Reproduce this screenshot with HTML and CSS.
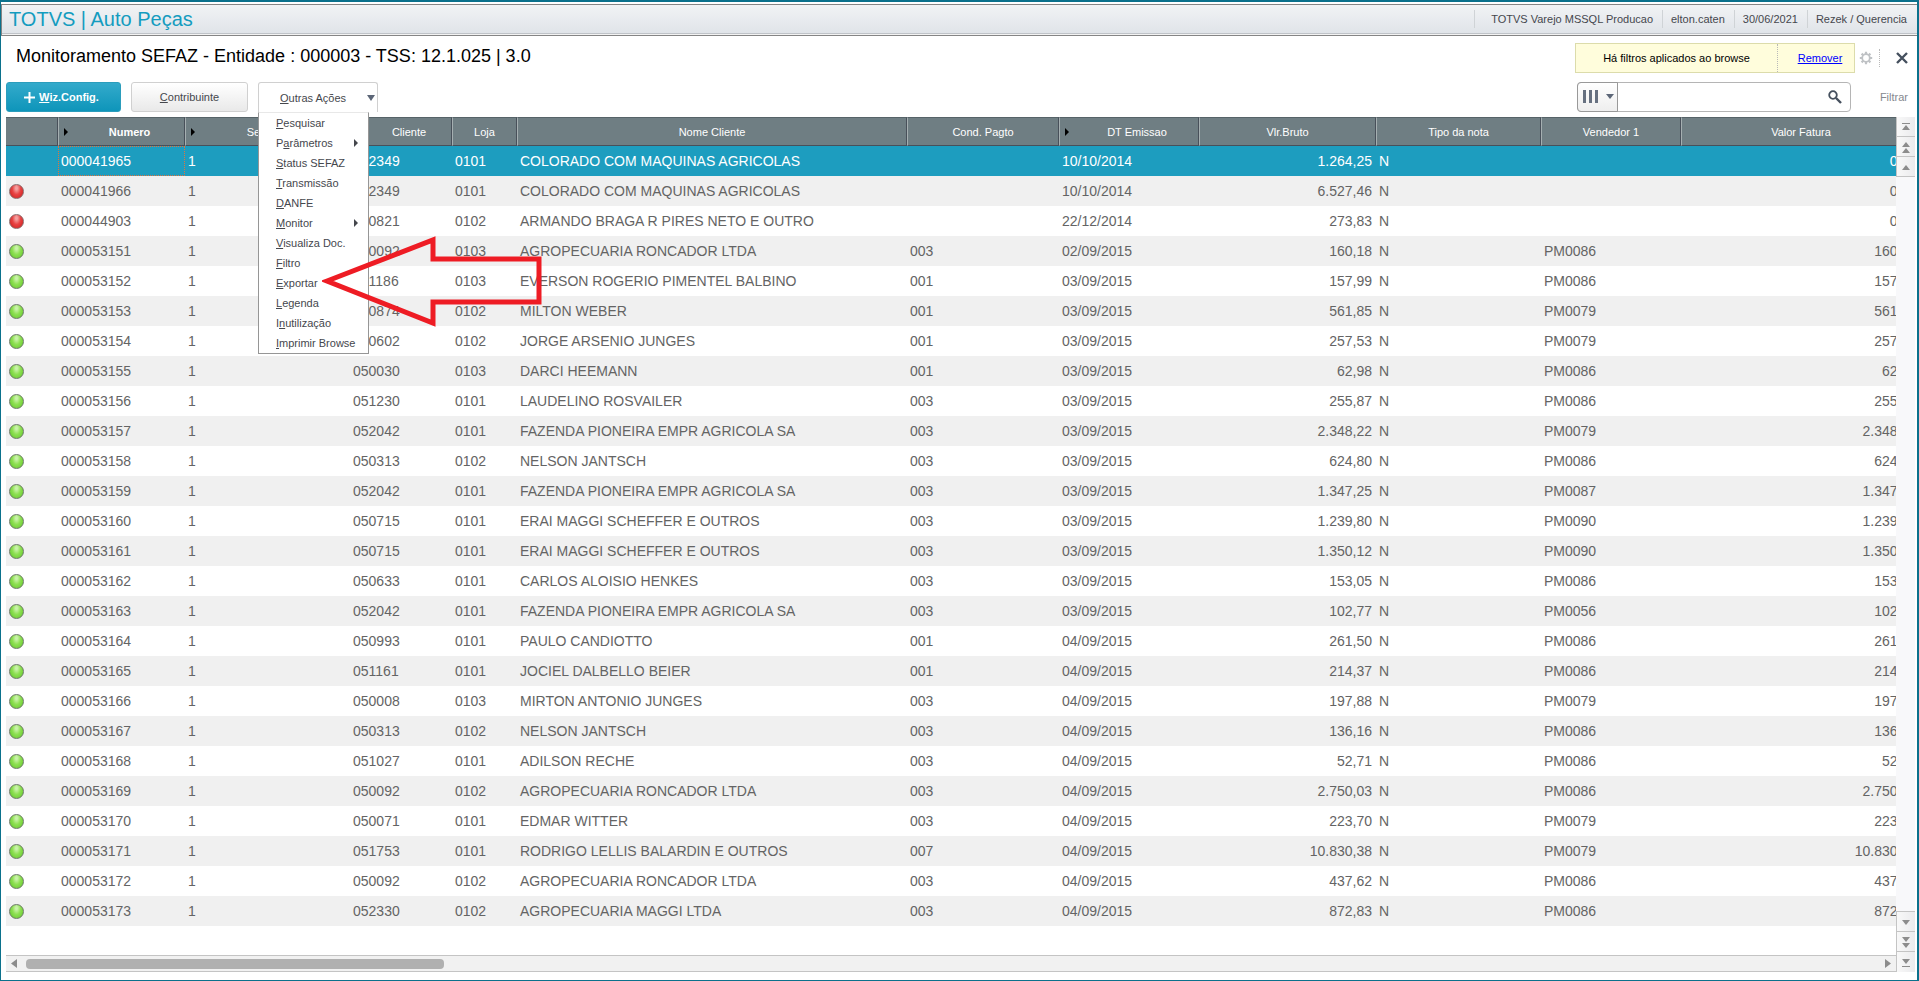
FILE: index.html
```html
<!DOCTYPE html>
<html lang="pt-BR">
<head>
  <meta charset="UTF-8" />
  <meta name="viewport" content="width=device-width, initial-scale=1.0" />
  <title>TOTVS | Auto Peças</title>
  <link rel="stylesheet" href="styles.css">
</head>
<body>
  <header class="topbar">
    <div class="brand">TOTVS | Auto Peças</div>
    <ul class="session">
      <li>TOTVS Varejo MSSQL Producao</li>
      <li>elton.caten</li>
      <li>30/06/2021</li>
      <li>Rezek / Querencia</li>
    </ul>
  </header>

  <main class="page">
    <div class="title-row">
      <h1>Monitoramento SEFAZ - Entidade : 000003 - TSS: 12.1.025 | 3.0</h1>
      <div class="filter-notice">
        <span class="notice-text">Há filtros aplicados ao browse</span>
        <span class="notice-action"><a href="#">Remover</a></span>
      </div>
      <button type="button" class="icon-button gear" aria-label="Configurar">
        <svg width="14" height="14" viewBox="0 0 14 14">
          <circle cx="7" cy="7" r="3.8" fill="none" stroke="#bfc2c5" stroke-width="1.8" />
          <path d="M7 0.8V3M7 11V13.2M0.8 7H3M11 7H13.2M2.6 2.6L4.2 4.2M9.8 9.8L11.4 11.4M2.6 11.4L4.2 9.8M9.8 4.2L11.4 2.6" stroke="#bfc2c5" stroke-width="2.2" />
        </svg>
      </button>
      <button type="button" class="icon-button close" aria-label="Fechar">
        <svg width="14" height="14" viewBox="0 0 14 14">
          <path d="M2 2L12 12M12 2L2 12" fill="none" stroke="#45505e" stroke-width="2.4" />
        </svg>
      </button>
    </div>

    <div class="toolbar">
      <button type="button" class="btn btn-primary">
        <svg width="11" height="11" viewBox="0 0 11 11"><path d="M5.5 0V11M0 5.5H11" stroke="#fff" stroke-width="2" /></svg>
        <span><u>W</u>iz.Config.</span>
      </button>
      <button type="button" class="btn btn-second"><span><u>C</u>ontribuinte</span></button>
      <div class="dropdown">
        <button type="button" class="btn btn-menu">
          <span><u>O</u>utras Ações</span>
          <svg width="8" height="6" viewBox="0 0 8 6"><path d="M0 0H8L4 6Z" fill="#5c6677" /></svg>
        </button>
        <ul class="menu">
          <li><button type="button"><u>P</u>esquisar</button></li>
          <li><button type="button" class="has-sub">P<u>a</u>râmetros</button></li>
          <li><button type="button"><u>S</u>tatus SEFAZ</button></li>
          <li><button type="button"><u>T</u>ransmissão</button></li>
          <li><button type="button"><u>D</u>ANFE</button></li>
          <li><button type="button" class="has-sub"><u>M</u>onitor</button></li>
          <li><button type="button"><u>V</u>isualiza Doc.</button></li>
          <li><button type="button"><u>F</u>iltro</button></li>
          <li><button type="button"><u>E</u>xportar</button></li>
          <li><button type="button"><u>L</u>egenda</button></li>
          <li><button type="button">I<u>n</u>utilização</button></li>
          <li><button type="button"><u>I</u>mprimir Browse</button></li>
        </ul>
        <svg class="pointer" width="220" height="94" viewBox="0 0 220 94">
          <path d="M5 45L111 4V23H217V66H111V87Z" fill="none" stroke="#ee1c24" stroke-width="5" />
        </svg>
      </div>

      <div class="search">
        <button type="button" class="columns" aria-label="Colunas">
          <svg width="32" height="14" viewBox="0 0 32 14">
            <path d="M0 0H3V13H0ZM6 0H9V13H6ZM12 0H15V13H12Z" fill="#667080" />
            <path d="M23 4H31L27 9Z" fill="#5c6677" />
          </svg>
        </button>
        <input type="text" aria-label="Pesquisar">
        <button type="button" class="icon-button lens" aria-label="Buscar">
          <svg width="14" height="14" viewBox="0 0 14 14">
            <circle cx="5" cy="5" r="3.8" fill="none" stroke="#45505e" stroke-width="1.8" />
            <path d="M8 8L13 13" stroke="#45505e" stroke-width="2.4" />
          </svg>
        </button>
      </div>
      <button type="button" class="filter-button">Filtrar</button>
    </div>

    <div class="browse">
      <div class="grid-area">
        <div class="grid">
          <table>
            <colgroup>
              <col class="c-status"><col class="c-numero"><col class="c-serie"><col class="c-cliente">
              <col class="c-loja"><col class="c-nome"><col class="c-cond"><col class="c-data">
              <col class="c-valor"><col class="c-tipo"><col class="c-vend"><col class="c-fatura">
            </colgroup>
            <thead>
              <tr>
                <th></th>
                <th class="sorted strong">Numero</th>
                <th class="sorted">Serie Docto</th>
                <th class="sorted">Cliente</th>
                <th>Loja</th>
                <th>Nome Cliente</th>
                <th>Cond. Pagto</th>
                <th class="sorted">DT Emissao</th>
                <th>Vlr.Bruto</th>
                <th>Tipo da nota</th>
                <th>Vendedor 1</th>
                <th>Valor Fatura</th>
              </tr>
            </thead>
            <tbody id="rows"></tbody>
          </table>
        </div>
        <div class="hscroll">
          <svg width="6" height="9" viewBox="0 0 6 9"><path d="M6 0V9L0 4.5Z" fill="#8c8c8c" /></svg>
          <div class="track"><div class="thumb"></div></div>
          <svg width="6" height="9" viewBox="0 0 6 9"><path d="M0 0V9L6 4.5Z" fill="#8c8c8c" /></svg>
        </div>
      </div>
      <div class="vscroll">
        <button type="button" aria-label="Primeiro"><svg width="8" height="8" viewBox="0 0 8 8"><path d="M0 0H8V1H0ZM0 7H8L4 2Z" fill="#8c8c8c" /></svg></button>
        <button type="button" aria-label="Página anterior"><svg width="8" height="11" viewBox="0 0 8 11"><path d="M0 5H8L4 0ZM0 11H8L4 6Z" fill="#8c8c8c" /></svg></button>
        <button type="button" aria-label="Anterior"><svg width="8" height="5" viewBox="0 0 8 5"><path d="M0 5H8L4 0Z" fill="#8c8c8c" /></svg></button>
        <div class="vtrack"></div>
        <button type="button" aria-label="Próximo"><svg width="8" height="5" viewBox="0 0 8 5"><path d="M0 0H8L4 5Z" fill="#8c8c8c" /></svg></button>
        <button type="button" aria-label="Próxima página"><svg width="8" height="11" viewBox="0 0 8 11"><path d="M0 0H8L4 5ZM0 6H8L4 11Z" fill="#8c8c8c" /></svg></button>
        <button type="button" aria-label="Último"><svg width="8" height="8" viewBox="0 0 8 8"><path d="M0 0H8L4 5ZM0 7H8V8H0Z" fill="#8c8c8c" /></svg></button>
      </div>
    </div>
  </main>
  <script src="script.js"></script>
</body>
</html>
```

FILE: styles.css
```css
* {
  box-sizing: border-box;
}
body {
  margin: 0;
  height: 100vh;
  display: flex;
  flex-direction: column;
  border: 1px solid #0b718c;
  border-top-width: 2px;
  border-right-width: 2px;
  background: #fff;
  font-family: "Liberation Sans", Arial, sans-serif;
  font-size: 11px;
  color: #45474d;
  overflow: hidden;
}
button, input {
  font: inherit;
  color: inherit;
}
button {
  padding: 0;
  border: none;
  background: none;
  cursor: pointer;
}
svg {
  display: block;
}
ul {
  list-style: none;
  margin: 0;
  padding: 0;
}

/* top bar */
.topbar {
  display: flex;
  align-items: center;
  justify-content: space-between;
  height: 32px;
  margin-top: 2px;
  padding: 0 1px 2px 7px;
  border: 1px solid #858585;
  border-width: 1px 0 1px 1px;
  background: linear-gradient(#f1f3f5, #dfe3e8);
  box-shadow: inset 0 -1px 0 #f3f3f3, inset 0 -2px 0 #bfc3c8;
}
.brand {
  font-size: 20px;
  line-height: 28px;
  color: #149cbf;
}
.session {
  display: flex;
}
.session li {
  line-height: 18px;
  padding: 0 9px 0 8px;
  border-left: 1px solid #cfd3d6;
}
.session li:first-child {
  padding-left: 16px;
}

.page {
  flex: 1;
  display: flex;
  flex-direction: column;
  min-height: 0;
  padding: 7px 2px 8px 5px;
}
.title-row {
  display: flex;
  align-items: center;
  height: 30px;
  padding-right: 6px;
}
h1 {
  flex: 1;
  margin: 0;
  padding: 0 0 4px 10px;
  font-size: 18px;
  line-height: 24px;
  font-weight: normal;
  color: #000;
}
.filter-notice {
  display: flex;
  align-items: center;
  width: 280px;
  height: 30px;
  border: 1px solid #dcdcab;
  background: #fffddc;
  color: #000;
  text-align: center;
}
.notice-text {
  flex: 1;
}
.notice-action {
  width: 77px;
  padding-left: 8px;
  line-height: 28px;
  border-left: 1px dotted #b9b9b9;
}
.notice-action a {
  color: #00f;
}
.icon-button {
  display: flex;
  align-items: center;
  justify-content: center;
}
.gear {
  width: 25px;
  height: 18px;
  padding-right: 2px;
  border-right: 1px dotted #b9b9b9;
}
.close {
  width: 29px;
  height: 18px;
  justify-content: flex-end;
}

/* toolbar */
.toolbar {
  display: flex;
  align-items: center;
  height: 30px;
  margin: 9px 0 5px;
  padding-right: 7px;
}
.btn {
  display: flex;
  align-items: center;
  justify-content: center;
  height: 30px;
  border-radius: 3px;
}
.btn-primary {
  gap: 4px;
  width: 115px;
  padding-right: 4px;
  background: linear-gradient(#33aacb, #0e95ba);
  border: 1px solid #2b9dbc;
  color: #fff;
  font-weight: bold;
}
.btn-second {
  width: 117px;
  margin: 0 10px;
  border: 1px solid #d0d0d0;
  background: linear-gradient(#fff, #e9e9e9);
}
.dropdown {
  position: relative;
}
.btn-menu {
  justify-content: space-between;
  width: 120px;
  padding: 0 2px 0 21px;
  border: 1px solid #d0d0d0;
  border-bottom: none;
  border-radius: 3px 3px 0 0;
  background: #fff;
}
.menu {
  position: absolute;
  z-index: 2;
  top: 30px;
  left: 0;
  width: 111px;
  border: 1px solid #969696;
  border-top-color: #e8e8e8;
  background: #fff;
}
.menu button {
  display: block;
  position: relative;
  width: 100%;
  padding-left: 17px;
  line-height: 20px;
  text-align: left;
  white-space: nowrap;
}
.has-sub::after {
  content: "";
  position: absolute;
  right: 10px;
  top: 6px;
  border: 4px solid transparent;
  border-left-color: #45474d;
  border-right: none;
}
.pointer {
  position: absolute;
  z-index: 3;
  top: 154px;
  left: 64px;
}

.search {
  display: flex;
  align-items: center;
  width: 274px;
  height: 30px;
  margin-left: auto;
  border: 1px solid #b5b5b5;
  border-radius: 4px;
}
.columns {
  display: flex;
  align-items: center;
  justify-content: center;
  width: 41px;
  height: 30px;
  margin-left: -1px;
  padding-left: 3px;
  border: 1px solid #999;
  border-radius: 4px 0 0 4px;
  background: linear-gradient(#fff, #eee);
}
.search input {
  flex: 1;
  min-width: 0;
  border: none;
  outline: none;
  background: none;
}
.lens {
  width: 30px;
  height: 28px;
}
.filter-button {
  width: 57px;
  text-align: right;
  color: #85888f;
}

/* browse */
.browse {
  flex: 1;
  display: flex;
  min-height: 0;
}
.grid-area {
  flex: 1;
  display: flex;
  flex-direction: column;
  min-width: 0;
}
.grid {
  flex: 1;
  min-height: 0;
  overflow: hidden;
}
table {
  width: 1915px;
  table-layout: fixed;
  border-collapse: separate;
  border-spacing: 0;
}
.c-status { width: 52px; }
.c-numero { width: 127px; }
.c-serie { width: 165px; }
.c-cliente { width: 102px; }
.c-loja { width: 65px; }
.c-nome { width: 390px; }
.c-cond { width: 152px; }
.c-data { width: 140px; }
.c-valor { width: 177px; }
.c-tipo { width: 165px; }
.c-vend { width: 140px; }
.c-fatura { width: 240px; }
th {
  position: relative;
  height: 29px;
  padding: 0;
  border: 1px solid #48505a;
  border-top-color: #566368;
  border-left-color: #a5afb1;
  background: #6f7e83;
  color: #fff;
  font-weight: normal;
}
th:first-child {
  border-left: none;
}
th.sorted {
  padding-left: 16px;
}
th.strong {
  font-weight: bold;
}
th.sorted::before {
  content: "";
  position: absolute;
  left: 5px;
  top: 10px;
  border: 4px solid transparent;
  border-left-color: #000;
  border-right: none;
}
td {
  height: 30px;
  padding: 0 4px 0 3px;
  font-size: 14px;
  line-height: 30px;
  color: #646464;
  white-space: nowrap;
}
tbody tr:nth-child(even) td {
  background: #f0f0f0;
}
tbody tr.selected td {
  background: #1d9dbf;
  color: #fff;
}
tr.selected td:nth-child(2) {
  outline: 1px dotted #e0733f;
  outline-offset: -1px;
}
td.num {
  text-align: right;
}
.dot {
  width: 15px;
  height: 15px;
  border-radius: 50%;
  border: 1px solid #6c7a66;
}
.dot.green {
  background: radial-gradient(ellipse at 50% 25%, #c9f2a8 10%, #8ee052 45%, #74d13c 75%);
}
.dot.red {
  border-color: #8a6a6a;
  background: radial-gradient(ellipse at 50% 25%, #f4a0a0 10%, #e84444 45%, #d82c2c 75%);
}

/* scroll bars */
.hscroll {
  display: flex;
  align-items: center;
  height: 17px;
  padding: 0 5px;
  border: 1px solid #c4c4c4;
  border-width: 1px 0;
  background: #f1f1f1;
}
.track {
  flex: 1;
  padding: 0 9px;
}
.thumb {
  width: 22.6%;
  height: 10px;
  border-radius: 4px;
  background: #b0b0b0;
}
.vscroll {
  display: flex;
  flex-direction: column;
  width: 19px;
}
.vscroll button {
  display: flex;
  flex-shrink: 0;
  align-items: center;
  justify-content: center;
  height: 20px;
  padding-top: 1px;
  border: 1px solid #c4c4c4;
  border-width: 0 0 1px 1px;
  background: linear-gradient(90deg, #f8f8f8, #ebebed);
}
.vscroll button:last-child {
  border-bottom: none;
}
.vtrack {
  flex: 1;
  border-bottom: 1px solid #c4c4c4;
  background: #f8f8fa;
}
```

FILE: script.js
```js
// status, numero, cliente, loja, nome, cond. pagto, emissao, valor, vendedor, fatura
const notas = [
  ['', '000041965', '052349', '0101', 'COLORADO COM MAQUINAS AGRICOLAS', '', '10/10/2014', '1.264,25', '', '0,00'],
  ['red', '000041966', '052349', '0101', 'COLORADO COM MAQUINAS AGRICOLAS', '', '10/10/2014', '6.527,46', '', '0,00'],
  ['red', '000044903', '050821', '0102', 'ARMANDO BRAGA R PIRES NETO E OUTRO', '', '22/12/2014', '273,83', '', '0,00'],
  ['green', '000053151', '050092', '0103', 'AGROPECUARIA RONCADOR LTDA', '003', '02/09/2015', '160,18', 'PM0086', '160,18'],
  ['green', '000053152', '051186', '0103', 'EVERSON ROGERIO PIMENTEL BALBINO', '001', '03/09/2015', '157,99', 'PM0086', '157,99'],
  ['green', '000053153', '050874', '0102', 'MILTON WEBER', '001', '03/09/2015', '561,85', 'PM0079', '561,85'],
  ['green', '000053154', '050602', '0102', 'JORGE ARSENIO JUNGES', '001', '03/09/2015', '257,53', 'PM0079', '257,53'],
  ['green', '000053155', '050030', '0103', 'DARCI HEEMANN', '001', '03/09/2015', '62,98', 'PM0086', '62,98'],
  ['green', '000053156', '051230', '0101', 'LAUDELINO ROSVAILER', '003', '03/09/2015', '255,87', 'PM0086', '255,87'],
  ['green', '000053157', '052042', '0101', 'FAZENDA PIONEIRA EMPR AGRICOLA SA', '003', '03/09/2015', '2.348,22', 'PM0079', '2.348,22'],
  ['green', '000053158', '050313', '0102', 'NELSON JANTSCH', '003', '03/09/2015', '624,80', 'PM0086', '624,80'],
  ['green', '000053159', '052042', '0101', 'FAZENDA PIONEIRA EMPR AGRICOLA SA', '003', '03/09/2015', '1.347,25', 'PM0087', '1.347,25'],
  ['green', '000053160', '050715', '0101', 'ERAI MAGGI SCHEFFER E OUTROS', '003', '03/09/2015', '1.239,80', 'PM0090', '1.239,80'],
  ['green', '000053161', '050715', '0101', 'ERAI MAGGI SCHEFFER E OUTROS', '003', '03/09/2015', '1.350,12', 'PM0090', '1.350,12'],
  ['green', '000053162', '050633', '0101', 'CARLOS ALOISIO HENKES', '003', '03/09/2015', '153,05', 'PM0086', '153,05'],
  ['green', '000053163', '052042', '0101', 'FAZENDA PIONEIRA EMPR AGRICOLA SA', '003', '03/09/2015', '102,77', 'PM0056', '102,77'],
  ['green', '000053164', '050993', '0101', 'PAULO CANDIOTTO', '001', '04/09/2015', '261,50', 'PM0086', '261,50'],
  ['green', '000053165', '051161', '0101', 'JOCIEL DALBELLO BEIER', '001', '04/09/2015', '214,37', 'PM0086', '214,37'],
  ['green', '000053166', '050008', '0103', 'MIRTON ANTONIO JUNGES', '003', '04/09/2015', '197,88', 'PM0079', '197,88'],
  ['green', '000053167', '050313', '0102', 'NELSON JANTSCH', '003', '04/09/2015', '136,16', 'PM0086', '136,16'],
  ['green', '000053168', '051027', '0101', 'ADILSON RECHE', '003', '04/09/2015', '52,71', 'PM0086', '52,71'],
  ['green', '000053169', '050092', '0102', 'AGROPECUARIA RONCADOR LTDA', '003', '04/09/2015', '2.750,03', 'PM0086', '2.750,03'],
  ['green', '000053170', '050071', '0101', 'EDMAR WITTER', '003', '04/09/2015', '223,70', 'PM0079', '223,70'],
  ['green', '000053171', '051753', '0101', 'RODRIGO LELLIS BALARDIN E OUTROS', '007', '04/09/2015', '10.830,38', 'PM0079', '10.830,38'],
  ['green', '000053172', '050092', '0102', 'AGROPECUARIA RONCADOR LTDA', '003', '04/09/2015', '437,62', 'PM0086', '437,62'],
  ['green', '000053173', '052330', '0102', 'AGROPECUARIA MAGGI LTDA', '003', '04/09/2015', '872,83', 'PM0086', '872,83']
];

document.getElementById('rows').innerHTML = notas.map(function (n, i) {
  const [status, numero, cliente, loja, nome, cond, data, valor, vend, fatura] = n;
  return `<tr${i === 0 ? ' class="selected"' : ''}>
    <td>${status ? `<div class="dot ${status}"></div>` : ''}</td>
    <td>${numero}</td><td>1</td><td>${cliente}</td><td>${loja}</td><td>${nome}</td>
    <td>${cond}</td><td>${data}</td><td class="num">${valor}</td><td>N</td>
    <td>${vend}</td><td class="num">${fatura}</td>
  </tr>`;
}).join('');
```
